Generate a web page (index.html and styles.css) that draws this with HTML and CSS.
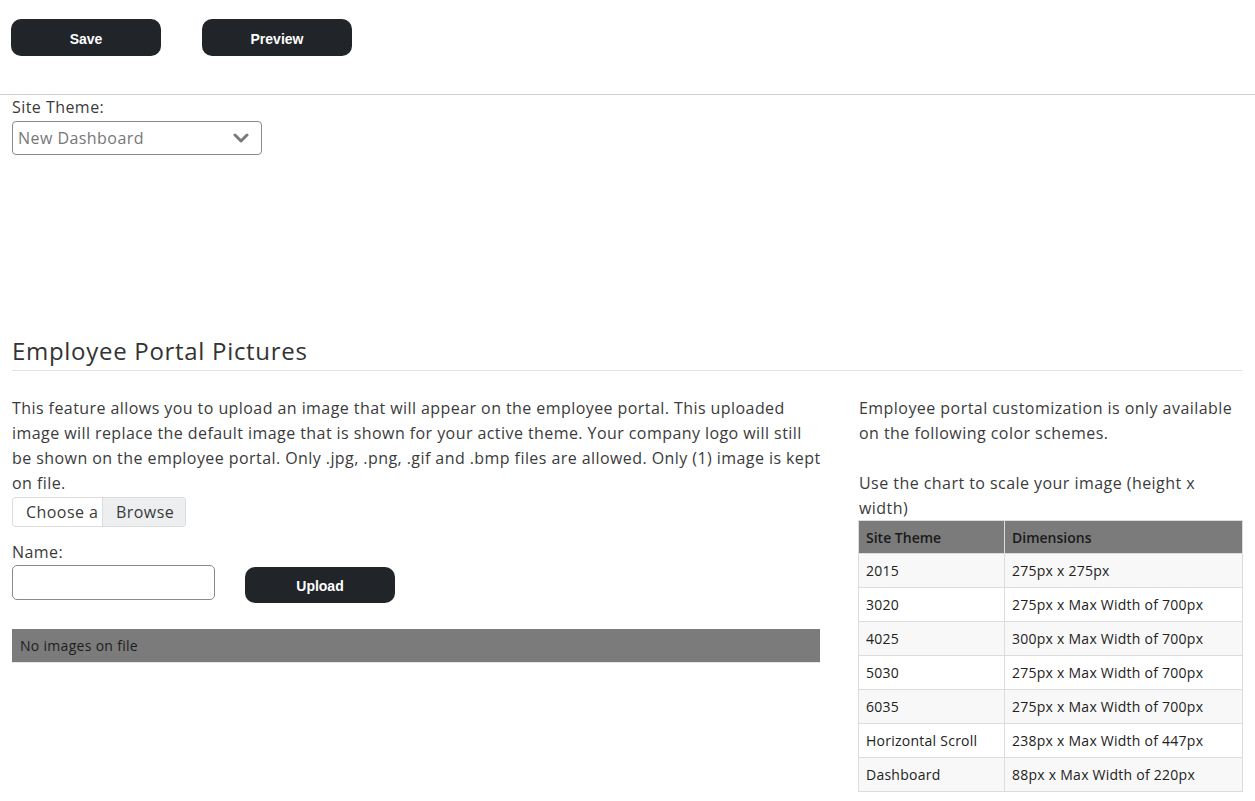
FILE: index.html
```html
<!DOCTYPE html>
<html lang="en">
<head>
<meta charset="utf-8">
<title>Employee Portal Settings</title>
<link rel="stylesheet" href="styles.css">
</head>
<body>
<div class="toolbar">
  <button class="btn" type="button">Save</button>
  <button class="btn" type="button">Preview</button>
</div>
<div class="theme">
  <label class="label">Site Theme:</label>
  <div class="select">
    <span class="select-value">New Dashboard</span>
    <svg class="chevron" width="16" height="10" viewBox="0 0 16 10"><polyline points="2,2 8,8 14,2" fill="none" stroke="#7a7a7a" stroke-width="3" stroke-linecap="round" stroke-linejoin="round"/></svg>
  </div>
</div>
<div class="pictures">
  <h2 class="heading">Employee Portal Pictures</h2>
  <div class="columns">
    <div class="left">
      <p class="text intro">This feature allows you to upload an image that will appear on the employee portal. This uploaded image will replace the default image that is shown for your active theme. Your company logo will still be&nbsp;shown on the employee portal. Only .jpg, .png, .gif and .bmp files are allowed. Only (1) image is kept on file.</p>
      <div class="file">
        <span class="file-name">Choose a</span>
        <span class="file-browse">Browse</span>
      </div>
      <label class="label name-label">Name:</label>
      <div class="name-row">
        <div class="input"></div>
        <button class="btn upload" type="button">Upload</button>
      </div>
      <div class="empty">No images on file</div>
    </div>
    <div class="right">
      <p class="text">Employee portal customization is only available on the following color schemes.</p>
      <p class="text gap">Use the chart to scale your image (height x width)</p>
      <table class="chart">
        <thead>
          <tr><th class="c1">Site Theme</th><th>Dimensions</th></tr>
        </thead>
        <tbody>
          <tr><td>2015</td><td>275px x 275px</td></tr>
          <tr><td>3020</td><td>275px x Max Width of 700px</td></tr>
          <tr><td>4025</td><td>300px x Max Width of 700px</td></tr>
          <tr><td>5030</td><td>275px x Max Width of 700px</td></tr>
          <tr><td>6035</td><td>275px x Max Width of 700px</td></tr>
          <tr><td>Horizontal Scroll</td><td>238px x Max Width of 447px</td></tr>
          <tr><td>Dashboard</td><td>88px x Max Width of 220px</td></tr>
        </tbody>
      </table>
    </div>
  </div>
</div>
</body>
</html>
```
FILE: styles.css
```css
* { box-sizing: border-box; }
html, body { margin: 0; padding: 0; background: #fff; }
body {
  font-family: "Open Sans", "Noto Sans", sans-serif;
  font-size: 16px;
  letter-spacing: 0.45px;
  color: #3b3b3b;
}
.toolbar {
  height: 95px;
  padding: 19px 11px 0;
  display: flex;
  gap: 41px;
  align-items: flex-start;
  border-bottom: 1px solid #cfcfcf;
}
.btn {
  width: 150px;
  height: 37px;
  border: none;
  border-radius: 10px;
  background: #212429;
  color: #fff;
  font-family: "Liberation Sans", Arial, sans-serif;
  font-weight: bold;
  font-size: 14px;
  letter-spacing: 0;
  padding: 2px 0 0;
}
.theme { padding: 0 12px; }
.label { display: block; line-height: 24px; }
.select {
  margin-top: 2px;
  width: 250px;
  height: 34px;
  border: 1px solid #8a8a8a;
  border-radius: 4px;
  display: flex;
  align-items: center;
  justify-content: space-between;
  padding: 0 12px 0 5px;
}
.select-value { color: #777; }
.chevron { display: block; }
.pictures { padding: 0 12px; margin-top: 181px; }
.heading {
  margin: 0;
  font-size: 24px;
  font-weight: normal;
  letter-spacing: 0.7px;
  line-height: 29px;
  padding-bottom: 5px;
  border-bottom: 1px solid #e3e3e3;
  color: #333;
}
.columns {
  display: grid;
  grid-template-columns: 808px 385px;
  column-gap: 38px;
  margin-top: 25px;
}
.right { padding-left: 1px; }
.text { margin: 0; line-height: 25px; }
.text.intro { letter-spacing: 0.43px; margin-right: -4px; }
.text.gap { margin-top: 25px; }
.file {
  margin-top: 1px;
  width: 174px;
  height: 30px;
  border: 1px solid #dcdcdc;
  border-radius: 3px;
  display: flex;
  overflow: hidden;
}
.file-name { width: 89px; padding-left: 13px; line-height: 28px; white-space: nowrap; overflow: hidden; }
.file-browse { flex: 1; background: #eceef0; border-left: 1px solid #dcdcdc; padding-left: 13px; line-height: 28px; }
.name-label { margin-top: 13px; }
.name-row { display: flex; align-items: flex-start; gap: 30px; margin-top: 1px; }
.input {
  width: 203px;
  height: 35px;
  border: 1px solid #8a8a8a;
  border-radius: 5px;
}
.upload { margin-top: 2px; height: 36px; }
.empty {
  margin-top: 26px;
  height: 34px;
  background: #7b7b7b;
  color: #1e1e1e;
  font-size: 14px;
  letter-spacing: 0.3px;
  line-height: 33px;
  padding-left: 8px;
  border-bottom: 1px solid #e6e6e6;
}
.chart {
  width: 385px;
  margin: -1px 0 0 -1px;
  border-collapse: collapse;
  font-size: 14px;
  letter-spacing: 0.25px;
  color: #222;
  border: 1px solid #dcdcdc;
}
.chart th, .chart td {
  text-align: left;
  padding: 0 7px;
  height: 34px;
  border: 1px solid #dcdcdc;
  white-space: nowrap;
}
.chart th { background: #7b7b7b; font-weight: 600; color: #1a1a1a; letter-spacing: 0; height: 33px; }
.chart .c1 { width: 146px; }
.chart tbody tr:nth-child(odd) td { background: #f8f8f8; }
```
